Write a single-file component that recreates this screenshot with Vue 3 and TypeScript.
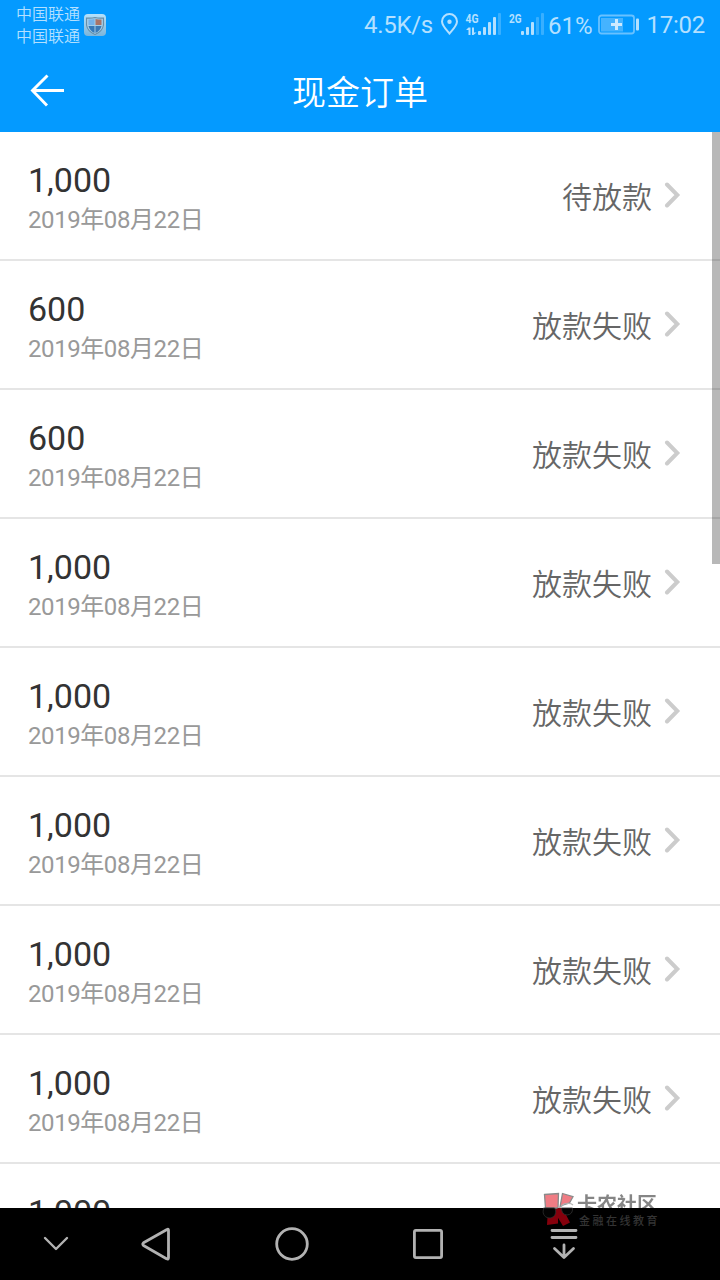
<script setup lang="ts">
interface Order {
  amount: string
  date: string
  status: string
}

const date = '2019年08月22日'
const failed = '放款失败'
const orders: Order[] = [
  { amount: '1,000', date, status: '待放款' },
  { amount: '600', date, status: failed },
  { amount: '600', date, status: failed },
  { amount: '1,000', date, status: failed },
  { amount: '1,000', date, status: failed },
  { amount: '1,000', date, status: failed },
  { amount: '1,000', date, status: failed },
  { amount: '1,000', date, status: failed },
  { amount: '1,000', date: '', status: '' },
]
</script>

<template>
  <div class="screen">
    <div class="status-bar">
      <div class="carriers">
        <span>中国联通</span>
        <span>中国联通</span>
      </div>
      <svg class="shield" width="24" height="24" viewBox="0 0 24 24">
        <defs>
          <linearGradient id="tile" x1="0" y1="0" x2="0" y2="1">
            <stop offset="0" stop-color="#b5e1fb" />
            <stop offset="1" stop-color="#7db5d9" />
          </linearGradient>
        </defs>
        <rect x="1" y="1" width="22" height="22" rx="4" fill="url(#tile)" />
        <path d="M3.500 5Q8 5.500 12 4.500Q16 5.500 20.500 5V12Q19.500 18.500 12 21.500Q4.500 18.500 3.500 12Z" fill="#a3cde8" stroke="#668ea9" stroke-width="1.100" />
        <path d="M5.500 6.500Q9 6.500 11.500 6V12H5.500Z" fill="#74b2ea" />
        <path d="M12.500 6Q15 6.500 18.500 6.500V12H12.500Z" fill="#a97468" />
        <path d="M5.500 13H11.500V20Q6.500 17.500 5.500 13Z" fill="#3579b8" />
        <path d="M12.500 13H18.500Q17.500 17.500 12.500 20Z" fill="#3b79b5" />
      </svg>
      <div class="spacer"></div>
      <span class="speed">4.5K/s</span>
      <svg class="signals" width="108" height="28" viewBox="438 10 108 28">
        <path d="M449.500 33.500C446 29.500 442 25.500 442 21.500A7.500 7.500 0 0 1 457 21.500C457 25.500 453 29.500 449.500 33.500Z" fill="none" stroke="#b4e0ff" stroke-width="2" />
        <circle cx="449.500" cy="21.700" r="2.200" fill="#b4e0ff" />
        <g fill="#b4e0ff" class="network">
          <text x="465.500" y="22.500" textLength="13" lengthAdjust="spacingAndGlyphs">4G</text>
          <text x="509" y="22.500" textLength="12.500" lengthAdjust="spacingAndGlyphs">2G</text>
          <path d="M468.500 27.500h2v7.500h-2v-5h-2.500zM472 27.500h2v5h2.500l-3 2.500h-1.500z" />
          <rect x="478" y="31" width="3" height="4" rx="1" />
          <rect x="483" y="27" width="3" height="8" rx="1" />
          <rect x="488" y="22" width="3" height="13" rx="1" />
          <rect x="493" y="17" width="3" height="18" rx="1" />
          <rect x="498" y="13" width="3" height="22" rx="1" opacity="0.300" />
          <rect x="521" y="31" width="3" height="4" rx="1" />
          <rect x="526" y="27" width="3" height="8" rx="1" />
          <rect x="531" y="22" width="3" height="13" rx="1" />
          <rect x="536" y="17" width="3" height="18" rx="1" opacity="0.300" />
          <rect x="541" y="13" width="3" height="22" rx="1" opacity="0.300" />
        </g>
      </svg>
      <span class="percent">61%</span>
      <svg class="battery" width="42" height="22" viewBox="0 0 42 22">
        <rect x="1" y="1.500" width="35" height="18" rx="2.500" fill="none" stroke="#69c1ff" stroke-width="1.800" />
        <rect x="3" y="4" width="22" height="13.500" fill="#45b3ff" />
        <path d="M18.500 5v11M13 10.500h11" stroke="#cdeaff" stroke-width="3" />
        <rect x="38" y="4.500" width="3" height="12" rx="1" fill="#b4e0ff" />
      </svg>
      <span class="clock">17:02</span>
    </div>

    <header class="title-bar">
      <svg class="back" width="36" height="36" viewBox="0 0 36 36">
        <path d="M3 18.500H35M18.500 3.500L3.500 18.500L18 33.500" fill="none" stroke="#fff" stroke-width="2.900" />
      </svg>
      <h1>现金订单</h1>
    </header>

    <main class="orders">
      <div v-for="(order, i) in orders" :key="i" class="order">
        <div class="info">
          <span class="amount">{{ order.amount }}</span>
          <span v-if="order.date" class="date">{{ order.date }}</span>
        </div>
        <div v-if="order.status" class="state">
          <span class="label">{{ order.status }}</span>
          <svg width="18" height="26" viewBox="0 0 18 26">
            <path d="M3 2.500L13.300 13L3 23.500" fill="none" stroke="#ccc" stroke-width="4" stroke-linecap="round" stroke-linejoin="miter" />
          </svg>
        </div>
      </div>
      <div class="scrollbar"></div>
    </main>

    <nav class="nav-bar">
      <svg width="720" height="72" viewBox="0 0 720 72" fill="none" stroke="#b2b2b2" stroke-width="2.800" stroke-linecap="round" stroke-linejoin="round">
        <path d="M45 30L56 41L67 30" stroke-width="2.400" />
        <path d="M167 21.500Q168.500 20.500 168.500 22.500V49.500Q168.500 52 166.500 50.700L143.500 37.500Q142 36 143.500 34.700Z" />
        <circle cx="292" cy="36" r="15.300" />
        <rect x="414.400" y="22.400" width="27.200" height="27.200" rx="1.500" />
        <path d="M552 22.500H576M552 29.500H576M564 37V49.500M554.500 40.500L564 49.500L573.500 40.500" />
      </svg>
    </nav>

    <div class="watermark">
      <svg width="34" height="36" viewBox="0 0 34 36">
        <path d="M2.500 2.500L16.500 1.500L16 16H3.500Z" fill="#f07c84" stroke="#8a8a8a" stroke-width="1.300" />
        <path d="M20.500 1.500L31 4.700L27.500 11L22 12.500L18 15Z" fill="#f07c84" stroke="#8a8a8a" stroke-width="1.300" />
        <path d="M18.500 16Q20 11.500 25 11.500Q29 11 31 13" fill="none" stroke="#b5b5b5" stroke-width="1.200" />
        <path d="M6 17L16 16V31.500L5 33ZM15.500 16H20.500L28 30.500L21 34L15.500 25Z" fill="#85000c" />
        <path d="M1.500 16H12.500A6.300 6.300 0 1 1 1.500 17.500Z" fill="#030303" stroke="#303030" stroke-width="0.800" />
        <path d="M19.500 16H30.500Q31 22.500 25 23Q19.500 22.500 19.500 16Z" fill="#030303" stroke="#303030" stroke-width="0.800" />
      </svg>
      <div class="mark-text">
        <div class="brand">卡农社区</div>
        <div class="slogan">金融在线教育</div>
      </div>
    </div>
  </div>
</template>

<style>
body {
  margin: 0;
}
</style>

<style scoped>
.screen {
  position: relative;
  display: flex;
  flex-direction: column;
  width: 720px;
  height: 1280px;
  overflow: hidden;
  background: #fff;
  font-family: Roboto, "Noto Sans CJK SC", sans-serif;
}

.status-bar {
  flex: none;
  display: flex;
  box-sizing: border-box;
  height: 50px;
  padding: 0 15px 0 16px;
  background: #049aff;
  color: #b4e0ff;
  font-size: 24px;
  line-height: 50px;
  white-space: nowrap;
}

.carriers {
  display: flex;
  flex-direction: column;
  padding-top: 4px;
  font-size: 16px;
  font-weight: 350;
  line-height: 22px;
}

.shield {
  margin: 13px 0 0 3px;
}

.spacer {
  flex: 1;
}

.speed {
  letter-spacing: -0.300px;
}

.signals {
  flex: none;
  margin: 10px 2px 0 5px;
}

.network {
  font-family: Roboto, sans-serif;
  font-size: 12.500px;
  font-weight: 700;
}

.percent {
  padding-top: 1px;
}

.battery {
  flex: none;
  margin: 14px 6px 0 6px;
}

.clock {
  letter-spacing: -0.250px;
}

.title-bar {
  flex: none;
  position: relative;
  display: flex;
  justify-content: center;
  height: 82px;
  background: #049aff;
}

.back {
  position: absolute;
  left: 29px;
  top: 22px;
}

h1 {
  margin: 0;
  color: #fff;
  font-family: "Noto Sans CJK SC", sans-serif;
  font-size: 34px;
  font-weight: 350;
  line-height: 82px;
}

.orders {
  position: relative;
  flex: 1;
  min-height: 0;
  overflow: hidden;
}

.order {
  display: flex;
  justify-content: space-between;
  box-sizing: border-box;
  height: 129px;
  padding: 28px 38px 0 28px;
  border-bottom: 2px solid #e5e5e5;
}

.info {
  display: flex;
  flex-direction: column;
}

.amount {
  color: #333;
  font-size: 34px;
  line-height: 40px;
}

.date {
  color: #999;
  font-size: 24px;
  letter-spacing: -0.420px;
  line-height: 40px;
}

.state {
  display: flex;
  align-items: center;
  height: 70px;
  gap: 12px;
  color: #666;
  font-size: 30px;
}

.label {
  padding-top: 5px;
  font-weight: 350;
  line-height: 70px;
}

.scrollbar {
  position: absolute;
  top: 0;
  right: 0;
  width: 8px;
  height: 432px;
  background: rgba(0, 0, 0, 0.280);
}

.nav-bar {
  flex: none;
  height: 72px;
  background: #000;
}

.nav-bar svg {
  display: block;
}

.watermark {
  position: absolute;
  left: 542px;
  top: 1192px;
  display: flex;
}

.mark-text {
  padding-left: 1px;
  white-space: nowrap;
}

.brand {
  padding-top: 2px;
  background: linear-gradient(#858585 16px, #000 16px);
  background-clip: text;
  color: transparent;
  font-size: 20px;
  font-weight: 700;
  line-height: 22px;
}

.slogan {
  padding-left: 2px;
  color: #343434;
  font-size: 11px;
  font-weight: 500;
  letter-spacing: 2.500px;
  line-height: 12px;
}
</style>
